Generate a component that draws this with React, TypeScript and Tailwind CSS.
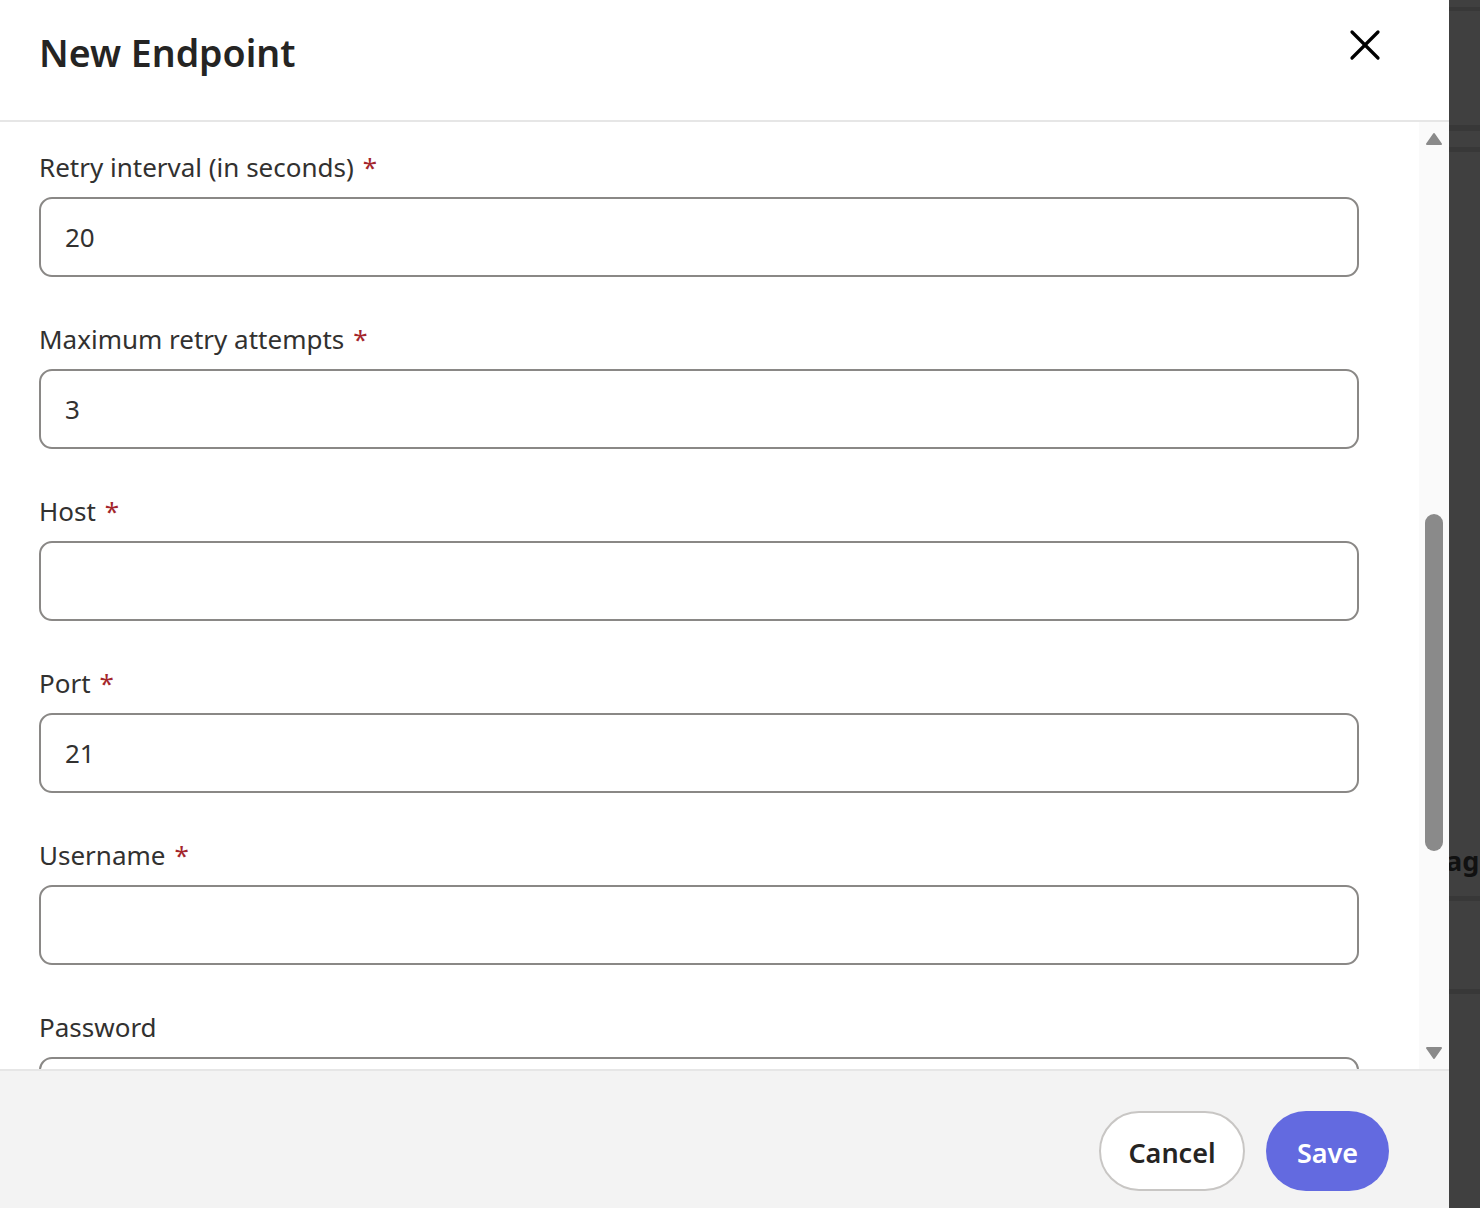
import { X } from 'lucide-react'

const fields = [
  { label: 'Retry interval (in seconds)', value: '20', required: true },
  { label: 'Maximum retry attempts', value: '3', required: true },
  { label: 'Host', value: '', required: true },
  { label: 'Port', value: '21', required: true },
  { label: 'Username', value: '', required: true },
  { label: 'Password', value: '', required: false },
]

function Field({ label, value, required }: { label: string; value: string; required: boolean }) {
  return (
    <div className="mb-[44px] flex flex-col">
      <label className="mb-[12px] h-[36px] text-[26px] leading-[36px] text-[#323130]">
        {label}
        {required && <span className="ml-[9px] text-[#a4262c]">*</span>}
      </label>
      <div className="flex h-[80px] w-[1320px] shrink-0 items-center rounded-[13px] border-2 border-[#8a8886] bg-white px-[24px] text-[26px] text-[#323130]">
        {value}
      </div>
    </div>
  )
}

function Scrollbar() {
  return (
    <div className="flex w-[30px] shrink-0 flex-col items-center bg-[#fafafa]">
      <svg width="18" height="14" viewBox="0 0 18 14" className="mt-[10px]">
        <path d="M9 2 L16 12 H2 Z" fill="#8a8a8a" stroke="#8a8a8a" strokeWidth="2" strokeLinejoin="round" />
      </svg>
      <div className="mt-[368px] h-[337px] w-[18px] rounded-full bg-[#8a8a8a]" />
      <div className="flex-1" />
      <svg width="18" height="14" viewBox="0 0 18 14" className="mb-[9px]">
        <path d="M2 2 H16 L9 12 Z" fill="#8a8a8a" stroke="#8a8a8a" strokeWidth="2" strokeLinejoin="round" />
      </svg>
    </div>
  )
}

export default function App() {
  return (
    <div className="flex h-[1208px] w-[1480px] overflow-hidden bg-[#404040] font-['Noto_Sans','Segoe_UI',sans-serif]">
      <div className="flex h-full w-[1449px] shrink-0 flex-col bg-white">
        <header className="flex h-[122px] shrink-0 items-start justify-between border-b-2 border-[#e6e6e6] pl-[39px] pr-[58px]">
          <h1 className="mt-[27px] text-[37.5px] font-semibold leading-[52px] text-[#252423]">New Endpoint</h1>
          <button className="mt-[19px] text-black">
            <X size={52} strokeWidth={1.5} />
          </button>
        </header>
        <div className="flex min-h-0 flex-1">
          <div className="min-w-0 flex-1 overflow-hidden pl-[39px] pt-[27px]">
            {fields.map((f) => (
              <Field key={f.label} {...f} />
            ))}
          </div>
          <Scrollbar />
        </div>
        <footer className="flex h-[139px] shrink-0 items-start justify-end gap-[21px] border-t-2 border-[#e6e6e6] bg-[#f3f3f3] pr-[60px] pt-[40px]">
          <button className="h-[80px] w-[146px] rounded-full border-2 border-[#c8c6c4] bg-white pt-[5px] text-[27px] font-semibold text-[#252423]">
            Cancel
          </button>
          <button className="h-[80px] w-[123px] rounded-full bg-[#636ae0] pt-[5px] text-[27px] font-semibold text-white">
            Save
          </button>
        </footer>
      </div>
      <div className="flex min-w-0 flex-1 flex-col">
        <div className="mt-[7px] h-[4px] bg-[#383838]" />
        <div className="mt-[114px] h-[6px] bg-[#383838]" />
        <div className="mt-[16px] h-[5px] bg-[#383838]" />
        <div className="mt-[691px] overflow-hidden whitespace-nowrap text-[27px] font-bold leading-[36px] text-[#111]">
          <span className="-ml-[3px]">ag</span>
        </div>
        <div className="mt-[17px] h-[5px] bg-[#383838]" />
        <div className="mt-[88px] h-[5px] bg-[#383838]" />
      </div>
    </div>
  )
}
